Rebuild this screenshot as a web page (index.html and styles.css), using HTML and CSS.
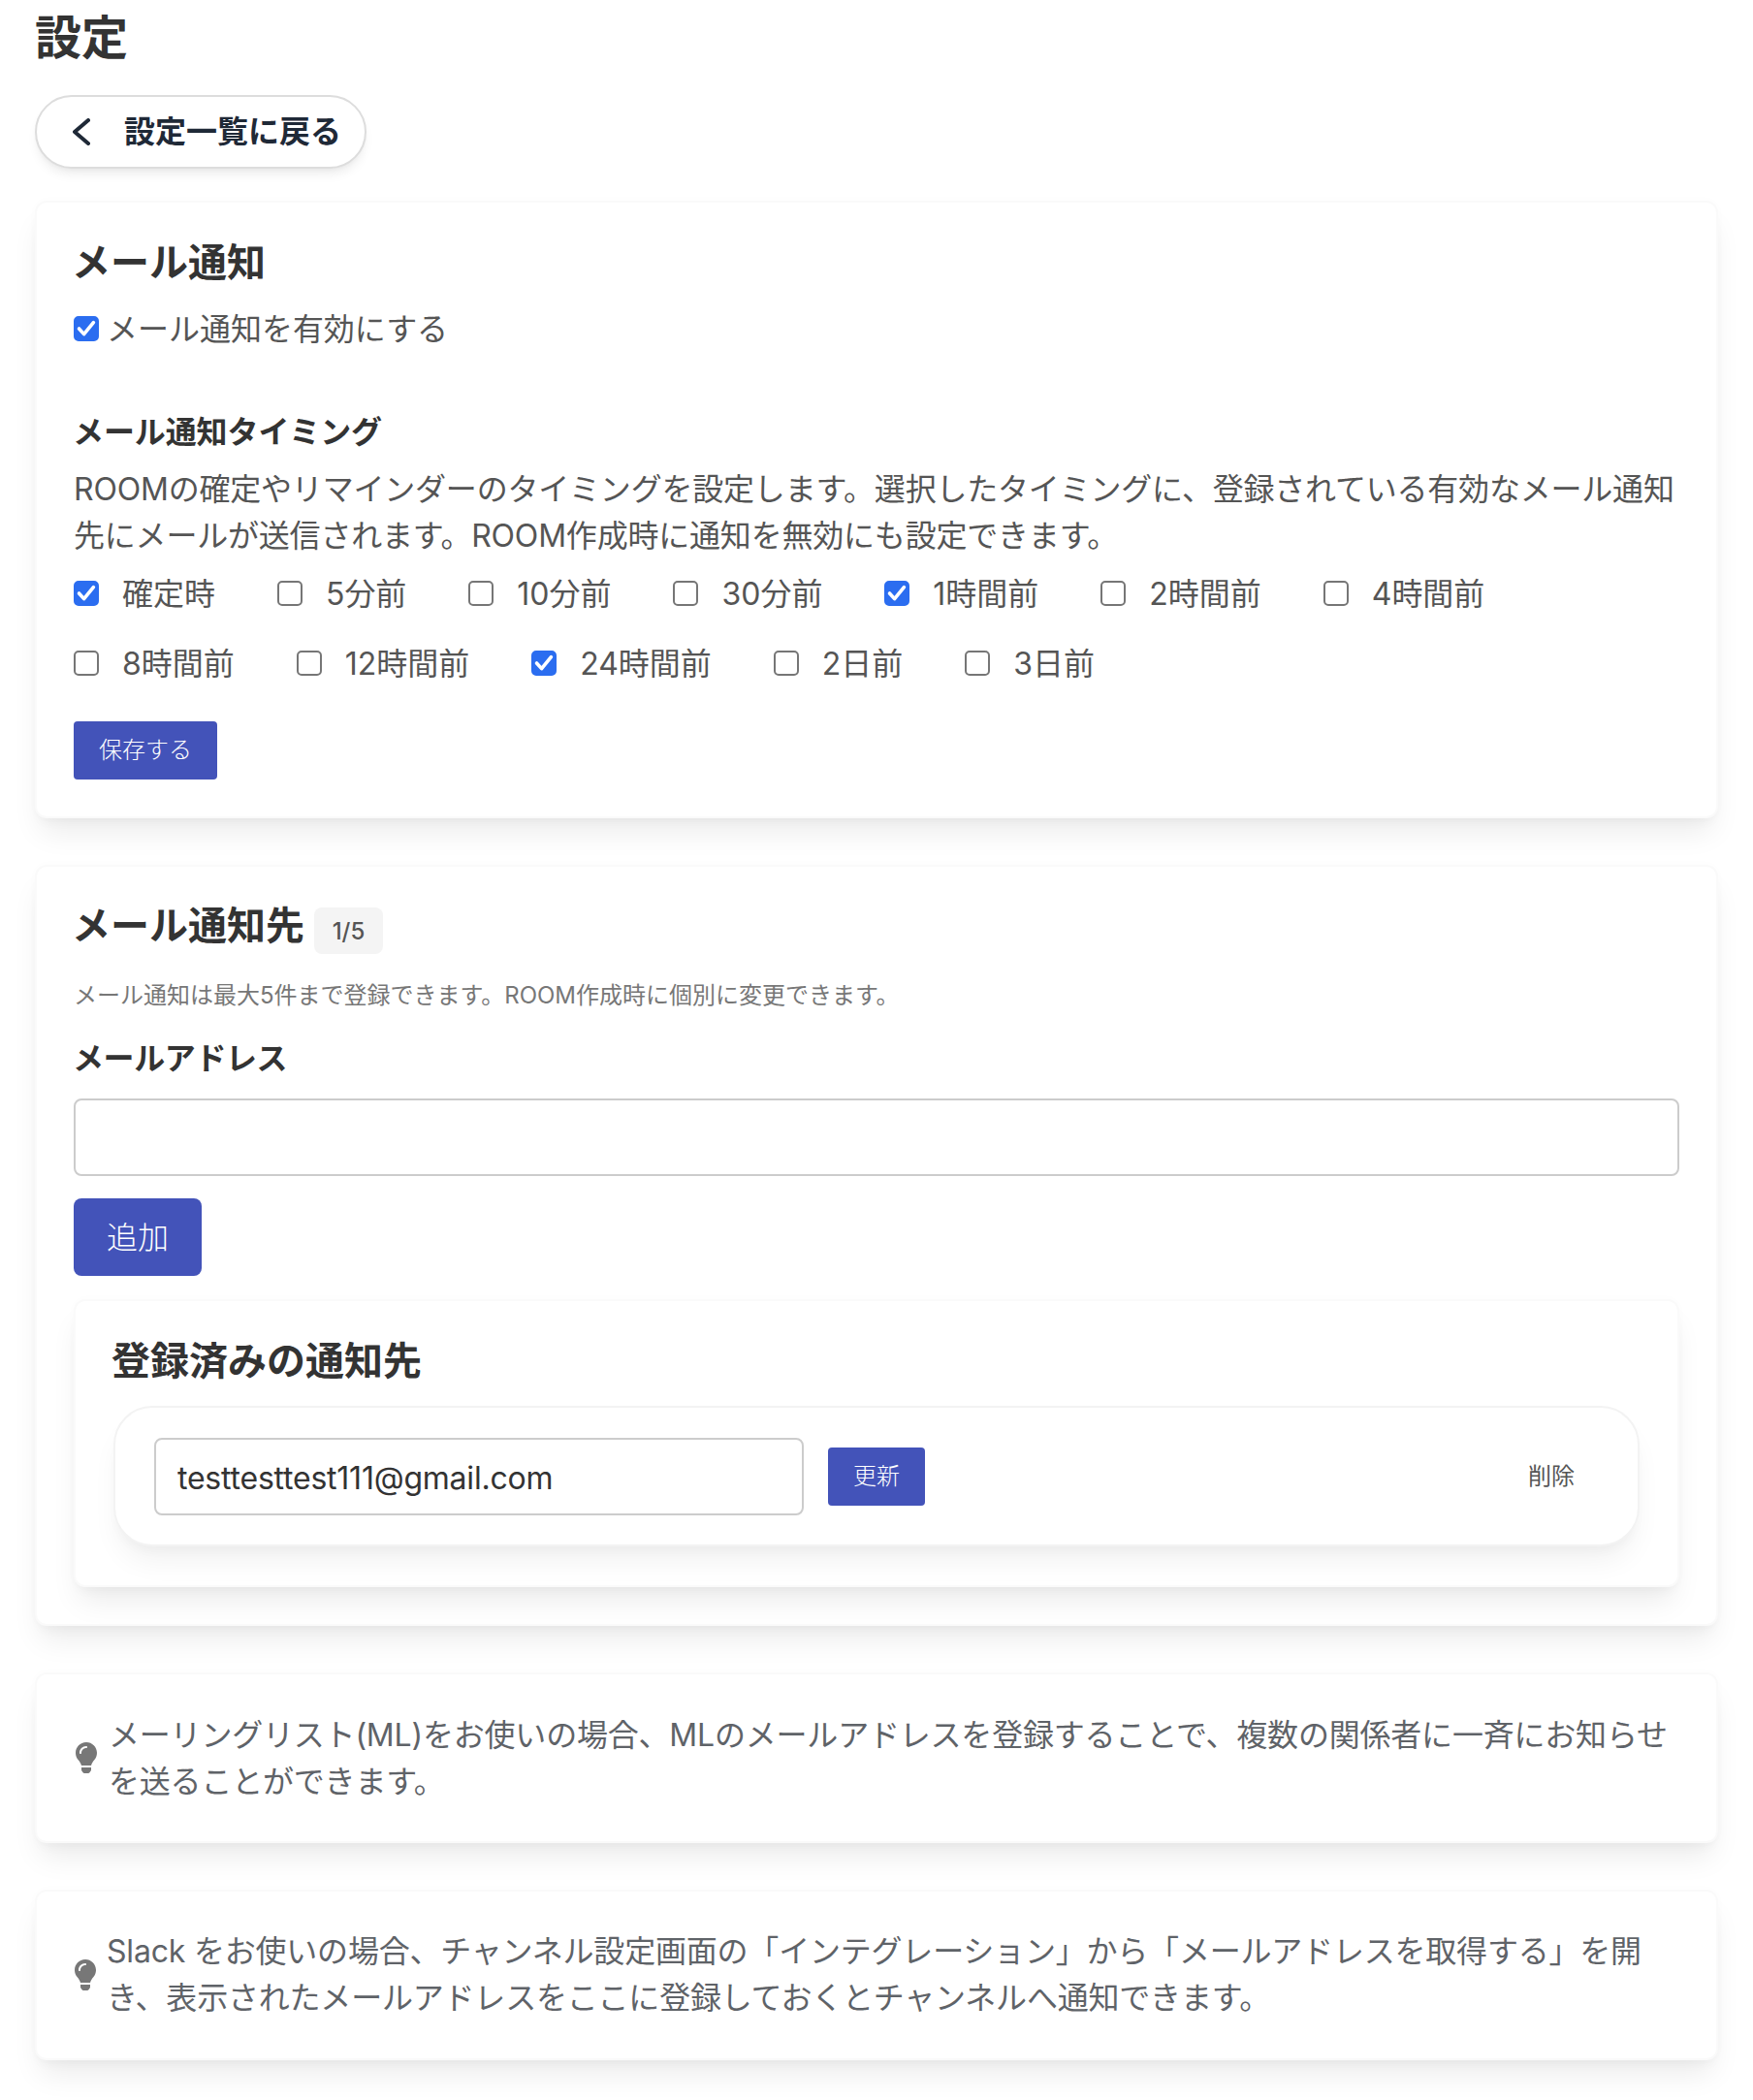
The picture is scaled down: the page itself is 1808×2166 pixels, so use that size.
FILE: index.html
```html
<!DOCTYPE html>
<html lang="ja">
<head>
<meta charset="utf-8">
<title>設定</title>
<link rel="stylesheet" href="styles.css">
</head>
<body>
<main class="page">
  <h1 class="page-title">設定</h1>
  <a class="back-link" href="#">
    <svg class="back-icon" viewBox="0 0 18 28" aria-hidden="true"><path d="M16 2 2 14l14 12" fill="none" stroke="currentColor" stroke-width="4" stroke-linecap="round" stroke-linejoin="round"/></svg>
    <span>設定一覧に戻る</span>
  </a>

  <section class="card card-timing">
    <h2 class="card-title">メール通知</h2>
    <label class="check check-main"><input type="checkbox" checked><span>メール通知を有効にする</span></label>
    <h3 class="sub-title">メール通知タイミング</h3>
    <p class="desc">ROOMの確定やリマインダーのタイミングを設定します。選択したタイミングに、登録されている有効なメール通知先にメールが送信されます。ROOM作成時に通知を無効にも設定できます。</p>
    <div class="timings">
      <label class="check"><input type="checkbox" checked><span>確定時</span></label>
      <label class="check"><input type="checkbox"><span>5分前</span></label>
      <label class="check"><input type="checkbox"><span>10分前</span></label>
      <label class="check"><input type="checkbox"><span>30分前</span></label>
      <label class="check"><input type="checkbox" checked><span>1時間前</span></label>
      <label class="check"><input type="checkbox"><span>2時間前</span></label>
      <label class="check"><input type="checkbox"><span>4時間前</span></label>
      <label class="check"><input type="checkbox"><span>8時間前</span></label>
      <label class="check"><input type="checkbox"><span>12時間前</span></label>
      <label class="check"><input type="checkbox" checked><span>24時間前</span></label>
      <label class="check"><input type="checkbox"><span>2日前</span></label>
      <label class="check"><input type="checkbox"><span>3日前</span></label>
    </div>
    <button class="btn btn-small btn-save" type="button">保存する</button>
  </section>

  <section class="card">
    <div class="title-row">
      <h2 class="card-title">メール通知先</h2>
      <span class="badge">1/5</span>
    </div>
    <p class="note">メール通知は最大5件まで登録できます。ROOM作成時に個別に変更できます。</p>
    <label class="field-label" for="email">メールアドレス</label>
    <input class="text-input" id="email" type="text">
    <button class="btn btn-large" type="button">追加</button>
    <div class="nested-card">
      <h2 class="card-title">登録済みの通知先</h2>
      <div class="address-row">
        <input class="text-input address-input" type="text" value="testtesttest111@gmail.com">
        <button class="btn btn-small" type="button">更新</button>
        <button class="delete" type="button">削除</button>
      </div>
    </div>
  </section>

  <section class="card tip tip-ml">
    <svg class="bulb" viewBox="0 0 352 512" aria-hidden="true"><path d="M96.06 454.35c.01 6.29 1.87 12.45 5.36 17.69l17.09 25.69a31.99 31.99 0 0 0 26.64 14.28h61.71a31.99 31.99 0 0 0 26.64-14.28l17.09-25.69a31.989 31.989 0 0 0 5.36-17.69l.04-38.35H96.01l.05 38.35zM0 176c0 44.37 16.45 84.85 43.56 115.78 16.52 18.85 42.36 58.23 52.21 91.45.04.26.07.52.11.78h160.24c.04-.26.07-.51.11-.78 9.85-33.22 35.69-72.6 52.21-91.45C335.55 260.85 352 220.37 352 176 352 78.61 272.91-.3 175.45 0 73.44.31 0 82.97 0 176zm176-80c-44.11 0-80 35.89-80 80 0 8.84-7.16 16-16 16s-16-7.16-16-16c0-61.76 50.24-112 112-112 8.84 0 16 7.16 16 16s-7.16 16-16 16z"/></svg>
    <p class="tip-text">メーリングリスト(ML)をお使いの場合、MLのメールアドレスを登録することで、複数の関係者に一斉にお知らせを送ることができます。</p>
  </section>

  <section class="card tip tip-slack">
    <svg class="bulb" viewBox="0 0 352 512" aria-hidden="true"><path d="M96.06 454.35c.01 6.29 1.87 12.45 5.36 17.69l17.09 25.69a31.99 31.99 0 0 0 26.64 14.28h61.71a31.99 31.99 0 0 0 26.64-14.28l17.09-25.69a31.989 31.989 0 0 0 5.36-17.69l.04-38.35H96.01l.05 38.35zM0 176c0 44.37 16.45 84.85 43.56 115.78 16.52 18.85 42.36 58.23 52.21 91.45.04.26.07.52.11.78h160.24c.04-.26.07-.51.11-.78 9.85-33.22 35.69-72.6 52.21-91.45C335.55 260.85 352 220.37 352 176 352 78.61 272.91-.3 175.45 0 73.44.31 0 82.97 0 176zm176-80c-44.11 0-80 35.89-80 80 0 8.84-7.16 16-16 16s-16-7.16-16-16c0-61.76 50.24-112 112-112 8.84 0 16 7.16 16 16s-7.16 16-16 16z"/></svg>
    <p class="tip-text">Slack をお使いの場合、チャンネル設定画面の「インテグレーション」から「メールアドレスを取得する」を開き、表示されたメールアドレスをここに登録しておくとチャンネルへ通知できます。</p>
  </section>
</main>
</body>
</html>
```
FILE: styles.css
```css
* { box-sizing: border-box; }
html, body { margin: 0; background: #fff; }
body {
  font-family: Inter, "Noto Sans CJK JP", sans-serif;
  font-size: 32px;
  line-height: 48px;
  color: #555;
}
.page { padding: 3px 36px 41px; }
h1, h2, h3, p { margin: 0; }
.page-title { font-size: 48px; line-height: 72px; font-weight: 700; color: #333; margin-bottom: 23px; }
.back-link {
  display: inline-flex; align-items: center; gap: 35px;
  height: 76px; padding: 0 24px 0 37px;
  border: 2px solid #ddd; border-radius: 38px;
  background: #fff; color: #1f2937; font-weight: 700; text-decoration: none;
  box-shadow: 0 8px 12px -3px rgba(0,0,0,.08), 0 3px 5px -2px rgba(0,0,0,.04);
}
.back-icon { width: 18px; height: 28px; flex: none; }
.card {
  display: block; background: #fff; border: 2px solid #fafafa; border-radius: 12px;
  padding: 37px 38px 38px; margin-top: 48px;
  box-shadow: 0 0 12px rgba(0,0,0,.015), 0 20px 30px -6px rgba(0,0,0,.08), 0 8px 12px -4px rgba(0,0,0,.03);
}
.back-link + .card { margin-top: 33px; }
.card-timing { padding-top: 38px; }
.card-title { font-size: 40px; line-height: 48px; font-weight: 700; color: #333; margin-left: -2px; }
.check { display: flex; align-items: center; gap: 24px; color: #555; letter-spacing: -.02px; }
.check input {
  appearance: none; flex: none; width: 26px; height: 26px; margin: -2px 0 0;
  border: 2px solid #767676; border-radius: 5px; background-color: #fff;
}
.check input:checked {
  border-color: #2b6df0; background-color: #2b6df0; background-origin: border-box;
  background-size: 26px 26px;
  background-image: url("data:image/svg+xml,%3Csvg xmlns='http://www.w3.org/2000/svg' viewBox='0 0 26 26'%3E%3Cpath d='M5.5 13 10.6 18.6 20.4 6.6' fill='none' stroke='%23fff' stroke-width='3.6' stroke-linecap='round' stroke-linejoin='round'/%3E%3C/svg%3E");
}
.check-main { gap: 8px; margin-top: 21px; }
.sub-title { font-size: 32px; line-height: 48px; font-weight: 700; color: #333; margin: 58px 0 0 -1px; letter-spacing: -.1px; }
.desc { margin-top: 11px; letter-spacing: -.2px; }
.timings { display: flex; flex-wrap: wrap; column-gap: 64px; row-gap: 24px; margin-top: 12px; }
.btn {
  display: block; border: 0; background: #4353b9; color: #fff;
  font-family: inherit; font-weight: 300; padding: 0;
}
.btn-small { height: 60px; padding: 0 26px; font-size: 24px; line-height: 36px; border-radius: 4px; }
.btn-save { margin-top: 35px; }
.btn-large { width: 132px; height: 80px; font-size: 32px; padding-bottom: 4px; margin-top: 23px; border-radius: 8px; }
.title-row { display: flex; gap: 10px; }
.badge {
  width: 71px; height: 48px; margin-top: 5px; background: #f4f4f4; border-radius: 8px;
  font-size: 24px; line-height: 50px; font-weight: 500; text-align: center; color: #555;
}
.note { font-size: 24px; line-height: 36px; color: #777; margin-top: 25px; }
.field-label { display: block; margin: 23px 0 0 -1px; font-weight: 700; color: #333; letter-spacing: -.4px; }
.text-input {
  display: block; width: 100%; height: 80px; margin-top: 17px; padding: 0 22px;
  border: 2px solid #ccc; border-radius: 8px; background: #fff;
  font: inherit; color: #333; outline: 0;
}
.nested-card {
  margin-top: 24px; padding: 38px 39px 40px; background: #fff; border: 2px solid #fafafa; border-radius: 12px;
  box-shadow: 0 0 12px rgba(0,0,0,.015), 0 20px 30px -6px rgba(0,0,0,.08), 0 8px 12px -4px rgba(0,0,0,.03);
}
.address-row {
  display: flex; align-items: center; margin-top: 22px; padding: 0 65px 0 40px; height: 145px;
  border: 2px solid #f3f3f3; border-radius: 40px; background: #fff;
  box-shadow: 0 20px 30px -6px rgba(0,0,0,.06), 0 8px 12px -4px rgba(0,0,0,.03);
}
.address-input { width: 670px; margin: 0 25px 0 0; flex: none; padding-top: 3px; letter-spacing: -.22px; }
.delete { margin-left: auto; border: 0; background: none; padding: 0; font: 24px/36px Inter, "Noto Sans CJK JP", sans-serif; color: #555; }
.tip { display: flex; align-items: center; padding: 38px; color: #5f6368; letter-spacing: -.2px; }
.tip-ml { padding: 39px 38px 37px 40px; gap: 12px; }
.tip-slack { padding: 38px 60px 38px 39px; gap: 11px; }
.bulb { width: 22px; height: 32px; flex: none; fill: #777; }
.tip-ml .bulb { margin-top: -2px; }
.tip-text { flex: 1; min-width: 0; }
```
